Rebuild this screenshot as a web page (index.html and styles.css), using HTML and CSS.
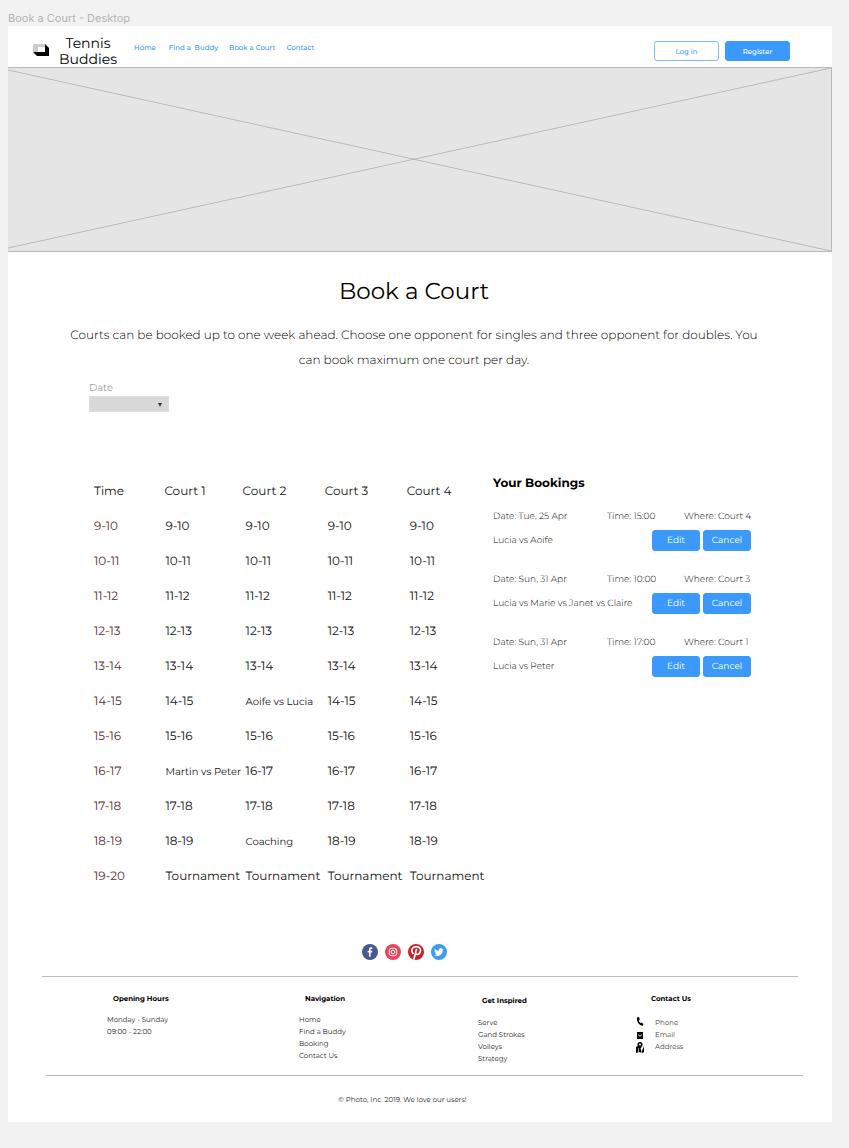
FILE: index.html
```
<!DOCTYPE html>
<html lang="en">
<head>
<meta charset="utf-8">
<meta name="viewport" content="width=device-width, initial-scale=1">
<title>Book a Court - Desktop</title>
<link rel="stylesheet" href="styles.css">
</head>
<body>
<div class="frame-label">Book a Court - Desktop</div>
<div class="page">
  <header class="header">
    <a class="brand" href="#">
      <svg class="brand-mark" width="16" height="12" viewBox="0 0 16 12" aria-hidden="true"><path d="M12 0l4 4v8H4L0 8h12z" fill="#000"/><path d="M0 0h12v8H0z" fill="#ccc"/><path d="M5 3h7v5H5z" fill="#fff"/></svg>
      <span class="brand-name">Tennis<br>Buddies</span>
    </a>
    <nav class="nav">
      <a href="#">Home</a>
      <a class="nav-find" href="#">Find a &nbsp;Buddy</a>
      <a href="#">Book a Court</a>
      <a href="#">Contact</a>
    </nav>
    <div class="account">
      <button class="btn btn-outline" type="button">Log in</button>
      <button class="btn" type="button">Register</button>
    </div>
  </header>

  <svg class="hero" viewBox="0 0 824 184" preserveAspectRatio="none" role="img" aria-label="Image placeholder"><path d="M0 2L824 184M0 181L824 0" fill="none" stroke="#a8a8a8" stroke-width=".7" vector-effect="non-scaling-stroke"/></svg>

  <main>
    <section class="intro">
      <h1>Book a Court</h1>
      <p>Courts can be booked up to one week ahead. Choose one opponent for singles and three opponent for doubles. You can book maximum one court per day.</p>
    </section>

    <div class="date">
      <label for="date">Date</label>
      <div class="select-wrap">
        <select id="date"><option></option></select>
        <svg class="caret" width="4" height="4" viewBox="0 0 4 4" aria-hidden="true"><path d="M0 0h4L2 4z" fill="#4a3434"/></svg>
      </div>
    </div>

    <div class="content">
      <table class="schedule">
        <colgroup><col class="col-time"><col class="col-first"><col class="col-court"><col class="col-court"><col></colgroup>
        <thead><tr><th scope="col">Time</th><th scope="col">Court 1</th><th scope="col">Court 2</th><th scope="col">Court 3</th><th scope="col">Court 4</th></tr></thead>
        <tbody>
          <tr><th scope="row">9-10</th><td>9-10</td><td>9-10</td><td>9-10</td><td>9-10</td></tr>
          <tr><th scope="row">10-11</th><td>10-11</td><td>10-11</td><td>10-11</td><td>10-11</td></tr>
          <tr><th scope="row">11-12</th><td>11-12</td><td>11-12</td><td>11-12</td><td>11-12</td></tr>
          <tr><th scope="row">12-13</th><td>12-13</td><td>12-13</td><td>12-13</td><td>12-13</td></tr>
          <tr><th scope="row">13-14</th><td>13-14</td><td>13-14</td><td>13-14</td><td>13-14</td></tr>
          <tr><th scope="row">14-15</th><td>14-15</td><td class="taken">Aoife vs Lucia</td><td>14-15</td><td>14-15</td></tr>
          <tr><th scope="row">15-16</th><td>15-16</td><td>15-16</td><td>15-16</td><td>15-16</td></tr>
          <tr><th scope="row">16-17</th><td class="taken">Martin vs Peter</td><td>16-17</td><td>16-17</td><td>16-17</td></tr>
          <tr><th scope="row">17-18</th><td>17-18</td><td>17-18</td><td>17-18</td><td>17-18</td></tr>
          <tr><th scope="row">18-19</th><td>18-19</td><td class="taken">Coaching</td><td>18-19</td><td>18-19</td></tr>
          <tr><th scope="row">19-20</th><td>Tournament</td><td>Tournament</td><td>Tournament</td><td>Tournament</td></tr>
        </tbody>
      </table>

      <section class="bookings">
        <h2>Your Bookings</h2>
        <article class="booking">
          <div class="details"><span>Date: Tue, 25 Apr</span><span>Time: 15:00</span><span>Where: Court 4</span></div>
          <div class="match"><span>Lucia vs Aoife</span><div class="actions"><button class="btn" type="button">Edit</button><button class="btn" type="button">Cancel</button></div></div>
        </article>
        <article class="booking">
          <div class="details"><span>Date: Sun, 31 Apr</span><span>Time: 10:00</span><span>Where: Court 3</span></div>
          <div class="match"><span>Lucia vs Marie vs Janet vs Claire</span><div class="actions"><button class="btn" type="button">Edit</button><button class="btn" type="button">Cancel</button></div></div>
        </article>
        <article class="booking">
          <div class="details"><span>Date: Sun, 31 Apr</span><span>Time: 17:00</span><span>Where: Court 1</span></div>
          <div class="match"><span>Lucia vs Peter</span><div class="actions"><button class="btn" type="button">Edit</button><button class="btn" type="button">Cancel</button></div></div>
        </article>
      </section>
    </div>
  </main>

  <footer class="footer">
    <div class="social">
      <a href="#" aria-label="Facebook"><svg width="16" height="16" viewBox="0 0 24 24"><circle cx="12" cy="12" r="12" fill="#475993"/><path d="M12.9 19v-6.4h2.2l.4-2.5h-2.6V8.6c0-.8.3-1.2 1.3-1.2h1.3V5.1c-.4-.1-1-.1-1.8-.1-2 0-3.2 1.1-3.2 3.2v1.9H8.4v2.5h2.1V19z" fill="#fff"/></svg></a>
      <a href="#" aria-label="Instagram"><svg width="16" height="16" viewBox="0 0 24 24"><circle cx="12" cy="12" r="12" fill="#e4465f"/><rect x="6.5" y="6.5" width="11" height="11" rx="3" fill="none" stroke="#fff" stroke-width="1.4"/><circle cx="12" cy="12" r="2.7" fill="none" stroke="#fff" stroke-width="1.4"/><circle cx="15.3" cy="8.7" r=".8" fill="#fff"/></svg></a>
      <a href="#" aria-label="Pinterest"><svg width="16" height="16" viewBox="0 0 24 24"><circle cx="12" cy="12" r="12" fill="#c8232c"/><path d="M7.500 14C3.500 9.500 6.500 4 12.300 4c4.700 0 7 3 6.300 6.800-.8 4.700-5.200 6.200-7 3.500M12.500 8.500L9 22.500" fill="none" stroke="#fff" stroke-width="2.500" stroke-linecap="round"/></svg></a>
      <a href="#" aria-label="Twitter"><svg width="16" height="16" viewBox="0 0 24 24"><circle cx="12" cy="12" r="12" fill="#3d9bf0"/><path d="M19 7.700c-.5.2-1.100.4-1.700.5.600-.4 1.100-1 1.300-1.600-.6.300-1.200.6-1.900.7a2.900 2.900 0 0 0-5 2.700C9.300 9.900 7.200 8.700 5.700 7c-.8 1.400-.3 3 .9 3.900-.5 0-.9-.1-1.300-.4 0 1.500 1 2.700 2.300 3-.4.100-.9.100-1.300 0 .4 1.200 1.500 2 2.700 2A6 6 0 0 1 5 16.700c4.900 3.100 12.500.2 12.500-7.400.6-.4 1.100-1 1.500-1.600z" fill="#fff"/></svg></a>
    </div>
    <div class="columns">
      <section class="column">
        <h3>Opening Hours</h3>
        <p>Monday - Sunday<br>09:00 - 22:00</p>
      </section>
      <section class="column">
        <h3>Navigation</h3>
        <ul><li><a href="#">Home</a></li><li><a href="#">Find a Buddy</a></li><li><a href="#">Booking</a></li><li><a href="#">Contact Us</a></li></ul>
      </section>
      <section class="column column-inspired">
        <h3>Get Inspired</h3>
        <ul><li><a href="#">Serve</a></li><li><a href="#">Gand Strokes</a></li><li><a href="#">Volleys</a></li><li><a href="#">Strategy</a></li></ul>
      </section>
      <section class="column column-contact">
        <h3>Contact Us</h3>
        <ul>
          <li><svg width="10" height="12" viewBox="0 0 10 12" aria-hidden="true"><path d="M2 .5l2-.5.8 2.600-1 .8c.3 1.100.8 1.900 1.600 2.600l1.100-.6L8.500 7l-.8 1.700C4.500 8.800 1.500 5 2 .5z"/></svg><a href="#">Phone</a></li>
          <li><svg width="10" height="12" viewBox="0 0 10 12" aria-hidden="true"><rect x="2" y="3" width="6" height="7"/><path d="M3 5.500l2 1.800 2-1.800" fill="none" stroke="#fff" stroke-width=".8"/></svg><a href="#">Email</a></li>
          <li><svg width="10" height="12" viewBox="0 0 10 12" aria-hidden="true"><path d="M1 6l2-1 4 5 2-5v6l-2 1-3-1-3 1z"/><path d="M5 1a2.500 2.500 0 0 1 2.500 2.500C7.500 5 5 8.500 5 8.500S2.500 5 2.500 3.500A2.500 2.500 0 0 1 5 1z"/><circle cx="5" cy="3.500" r="1" fill="#fff"/><path d="M3.500 7v4M6.500 8v4" stroke="#fff" stroke-width=".6"/></svg><a href="#">Address</a></li>
        </ul>
      </section>
    </div>
    <p class="copyright">© Photo, Inc. 2019. We love our users!</p>
  </footer>
</div>
</body>
</html>
```
FILE: styles.css
```
* { box-sizing: border-box; }

body {
  margin: 0;
  padding: 0 17px 26px 8px;
  background: #f2f2f2;
  color: #222;
  font-family: Montserrat, Inter, "Open Sans", sans-serif;
  text-rendering: geometricPrecision;
}

h1, h2, h3, p, ul { margin: 0; padding: 0; }
ul { list-style: none; }
a { color: inherit; text-decoration: none; }
svg { display: block; }

.frame-label {
  padding-top: 10px;
  height: 26px;
  font: 11px/16px Inter, sans-serif;
  color: #b3b3b3;
}

.page { background: #fff; }

.header {
  display: flex;
  align-items: center;
  height: 41px;
  padding: 0 42px 0 25px;
}

.brand {
  display: flex;
  align-items: center;
  gap: 10px;
  color: #000;
}

.brand-mark { margin-top: 6px; }

.brand-name {
  padding-top: 8px;
  font-size: 14px;
  line-height: 16px;
  font-weight: 400;
  text-align: center;
}

.nav {
  display: flex;
  gap: 11px;
  margin-left: 17px;
  padding-top: 2px;
  font-size: 7px;
  line-height: 12px;
  font-weight: 500;
  color: #3b99fc;
}

.nav-find { margin-left: 2px; }

.account {
  display: flex;
  gap: 6px;
  margin-left: auto;
  padding-top: 9px;
}

.btn {
  width: 48px;
  height: 21px;
  padding: 0;
  border: 1px solid #3b99fc;
  border-radius: 3px;
  background: #3b99fc;
  color: #fff;
  font: inherit;
  font-size: 9px;
  font-weight: 400;
  text-rendering: inherit;
}

.account .btn {
  width: 65px;
  height: 20px;
  font-size: 7px;
  font-weight: 500;
}

.account .btn-outline {
  background: #fff;
  border-color: #7abef9;
  color: #3b99fc;
}

.hero {
  width: 100%;
  height: 185px;
  border: 1px solid #b8b8b8;
  border-left: 0;
  background: #e5e5e5;
}

.intro {
  padding: 23px 68px 0 56px;
  text-align: center;
}

h1 {
  color: #000;
  font-size: 23px;
  line-height: 32px;
  font-weight: 400;
}

.intro p {
  margin-top: 16px;
  font-size: 12px;
  line-height: 25px;
  font-weight: 300;
  color: #000;
}

.date {
  width: 80px;
  margin: 7px 0 0 81px;
}

.date label {
  display: block;
  font-size: 10px;
  line-height: 16px;
  font-weight: 300;
  color: #777;
}

.select-wrap { position: relative; }

.date select {
  display: block;
  width: 100%;
  height: 16px;
  border: 1px solid #ddd;
  border-radius: 0;
  background: #d8d8d8;
  appearance: none;
}

.caret {
  position: absolute;
  right: 7px;
  top: 7px;
  pointer-events: none;
}

.content {
  display: grid;
  grid-template-columns: minmax(0, 391fr) minmax(0, 258fr);
  align-items: start;
  gap: 8px;
  padding: 62px 81px 0 86px;
}

.schedule {
  width: 100%;
  border-collapse: collapse;
  table-layout: fixed;
  font-size: 12px;
  line-height: 16px;
  white-space: nowrap;
  color: #111;
}

.schedule th, .schedule td {
  height: 35px;
  padding: 0;
  text-align: left;
  font-weight: 400;
}

.col-time { width: 18%; }
.col-first { width: 20%; }
.col-court { width: 21%; }
.schedule td { padding-left: 3px; }
.schedule td:nth-child(2) { padding-left: 1px; }
.schedule tbody th { color: #5a3030; }
.schedule .taken { font-size: 10px; }

.bookings {
  font-size: 9px;
  line-height: 12px;
  font-weight: 300;
  color: #000;
}

.bookings h2 {
  font-size: 12px;
  line-height: 20px;
  color: #000;
}

.booking { margin-top: 17px; }
.booking + .booking { margin-top: 23px; }

.details {
  display: grid;
  grid-template-columns: 114px 77px 1fr;
  white-space: nowrap;
}

.match {
  display: flex;
  justify-content: space-between;
  align-items: center;
  margin-top: 7px;
}

.actions { display: flex; gap: 3px; }

.footer {
  padding: 50px 29px 16px 34px;
  font-size: 7px;
  line-height: 12px;
  color: #222;
}

.social {
  display: flex;
  justify-content: center;
  gap: 7px;
  padding-right: 37px;
}

.columns {
  display: grid;
  grid-template-columns: 192fr 179fr 157fr 163fr;
  height: 99px;
  margin: 16px 5px 0 0;
  padding: 16px 0 0 65px;
  border-top: 1px solid #bbb;
}

.column h3 {
  margin-bottom: 9px;
  padding-left: 6px;
  font-size: 7px;
  line-height: 12px;
  color: #000;
}

.column-inspired { padding-top: 2px; }
.column-inspired h3 { margin-bottom: 10px; padding-left: 4px; }
.column-contact h3 { margin-bottom: 12px; padding-left: 16px; }

.column-contact li {
  display: flex;
  gap: 10px;
  color: #444;
}

.column-contact svg { fill: #000; }

.copyright {
  margin-left: 4px;
  padding: 18px 44px 0 0;
  border-top: 1px solid #bbb;
  text-align: center;
}
```
